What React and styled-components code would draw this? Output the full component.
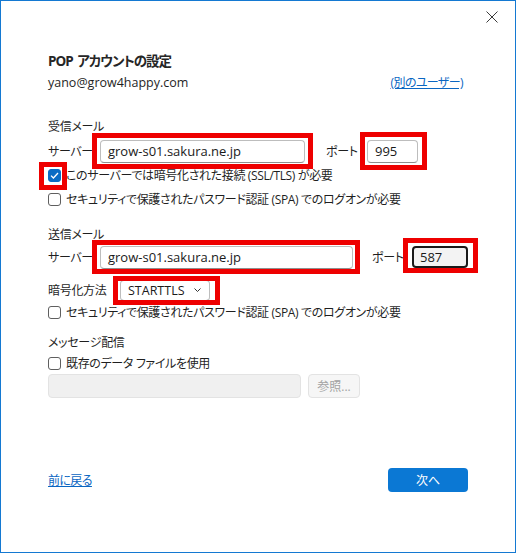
import React from "react";
import styled, { createGlobalStyle } from "styled-components";

const Global = createGlobalStyle`
  html, body { margin: 0; padding: 0; background: #ffffff; }
  body { font-family: "Open Sans", "Noto Sans CJK JP", sans-serif; }
`;

const Window = styled.div`
  box-sizing: border-box;
  width: 516px;
  height: 553px;
  border: 1px solid #1479d2;
  background: #ffffff;
  display: flex;
  flex-direction: column;
  font-family: "Open Sans", "Noto Sans CJK JP", sans-serif;
  font-feature-settings: "palt";
  font-size: 12px;
  color: #1f1f1f;
`;

const TitleBar = styled.div`
  display: flex;
  justify-content: flex-end;
  height: 32px;
`;

const CloseButton = styled.button`
  width: 46px;
  height: 32px;
  border: none;
  background: transparent;
  padding: 0;
  display: flex;
  align-items: center;
  justify-content: center;
  color: #333;
`;

const Content = styled.div`
  flex: 1;
  display: flex;
  flex-direction: column;
  padding: 0 47px 60px 47px;
`;

const Title = styled.h1`
  margin: 18px 0 0 0;
  height: 20px;
  line-height: 20px;
  font-size: 13.5px;
  font-weight: 700;
  letter-spacing: -1px;
  word-spacing: 2px;
  color: #262626;
`;

const EmailRow = styled.div`
  display: flex;
  justify-content: space-between;
  align-items: center;
  height: 22px;
  font-size: 12.5px;
`;

const Link = styled.a`
  color: #0a66c2;
  text-decoration: underline;
  cursor: pointer;
  font-size: 12px;
  letter-spacing: ${(p) => p.$ls || 0}px;
  margin-right: ${(p) => p.$mr || 0}px;
`;

const JpText = styled.span`
  letter-spacing: -0.35px;
  white-space: nowrap;
`;

const SectionHeading = styled.div`
  height: 20px;
  line-height: 20px;
  letter-spacing: -0.3px;
  margin-top: ${(p) => p.$mt}px;
`;

const FieldRow = styled.div`
  display: flex;
  align-items: center;
  height: ${(p) => p.$h || 24}px;
  margin-top: ${(p) => p.$mt || 0}px;
`;

const Label = styled.span`
  width: ${(p) => p.$w}px;
  margin-left: ${(p) => p.$ml || 0}px;
  flex-shrink: 0;
  white-space: nowrap;
  letter-spacing: -0.3px;
`;

const Highlight = styled.span`
  position: relative;
  display: inline-flex;
  &::after {
    content: "";
    position: absolute;
    top: ${(p) => -p.$t}px;
    right: ${(p) => -p.$r}px;
    bottom: ${(p) => -p.$b}px;
    left: ${(p) => -p.$l}px;
    border: 5px solid #ee0000;
    pointer-events: none;
  }
`;

const TextBox = styled.div`
  box-sizing: border-box;
  width: ${(p) => p.$w}px;
  height: ${(p) => p.$h || 23}px;
  border: ${(p) => (p.$focused ? "2px solid #1a1a1a" : "1px solid #bdbdbd")};
  border-bottom-color: ${(p) => (p.$focused ? "#1a1a1a" : "#8f8f8f")};
  border-radius: 4px;
  background: ${(p) => (p.$focused ? "#f3f3f3" : p.$disabled ? "#f0f0f0" : "#ffffff")};
  ${(p) => p.$disabled && "border-color: #e3e3e3;"}
  display: flex;
  align-items: center;
  padding-left: ${(p) => (p.$focused ? 6 : 7)}px;
  font-size: 13px;
  color: #1a1a1a;
`;

const Select = styled.div`
  box-sizing: border-box;
  width: 90px;
  height: 21px;
  border: 1px solid #bdbdbd;
  border-bottom-color: #8f8f8f;
  border-radius: 4px;
  display: flex;
  align-items: center;
  justify-content: space-between;
  padding: 0 8px 0 7px;
  font-size: 12.5px;
  color: #1a1a1a;
`;

const CheckRow = styled.label`
  display: flex;
  align-items: center;
  gap: 5px;
  height: ${(p) => p.$h || 24}px;
`;

const Box = styled.span`
  box-sizing: border-box;
  width: 13px;
  height: 13px;
  border-radius: 3px;
  border: 1px solid ${(p) => (p.$checked ? "#0a6cc4" : "#5f5f5f")};
  background: ${(p) => (p.$checked ? "#0a6cc4" : "#ffffff")};
  display: inline-flex;
  align-items: center;
  justify-content: center;
  flex-shrink: 0;
`;

const GhostButton = styled.div`
  box-sizing: border-box;
  width: 52px;
  height: 24px;
  margin-left: 7px;
  border: 1px solid #e3e3e3;
  border-radius: 4px;
  background: #f6f6f6;
  color: #a3a3a3;
  display: flex;
  align-items: center;
  justify-content: center;
`;

const Footer = styled.div`
  margin-top: auto;
  display: flex;
  justify-content: space-between;
  align-items: center;
  height: 24px;
`;

const PrimaryButton = styled.button`
  width: 80px;
  height: 24px;
  border: none;
  border-radius: 4px;
  background: #0b78d4;
  color: #ffffff;
  font-family: inherit;
  font-feature-settings: "palt";
  font-size: 12px;
`;

function Checkbox({ checked }) {
  return (
    <Box $checked={checked}>
      {checked && (
        <svg width="9" height="7" viewBox="0 0 9 7">
          <path d="M1 3.6 L3.4 6 L8 1" fill="none" stroke="#fff" strokeWidth="1.3" />
        </svg>
      )}
    </Box>
  );
}

export default function App() {
  return (
    <>
      <Global />
      <Window>
        <TitleBar>
          <CloseButton aria-label="close">
            <svg width="12" height="12" viewBox="0 0 12 12">
              <path d="M0.5 0.5 L11.5 11.5 M11.5 0.5 L0.5 11.5" stroke="#3a3a3a" strokeWidth="1" fill="none" />
            </svg>
          </CloseButton>
        </TitleBar>
        <Content>
          <Title>POP アカウントの設定</Title>
          <EmailRow>
            <span>yano@grow4happy.com</span>
            <Link $mr={5} $ls={-0.6}>(別のユーザー)</Link>
          </EmailRow>

          <SectionHeading $mt={24}>受信メール</SectionHeading>
          <FieldRow $mt={2}>
            <Label $w={52}>サーバー</Label>
            <Highlight $t={7} $r={8} $b={6} $l={8}>
              <TextBox $w={205}>grow-s01.sakura.ne.jp</TextBox>
            </Highlight>
            <Label $w={41} $ml={21}>ポート</Label>
            <Highlight $t={8} $r={9} $b={7} $l={7}>
              <TextBox $w={51}>995</TextBox>
            </Highlight>
          </FieldRow>
          <CheckRow>
            <Highlight $t={7} $r={6} $b={8} $l={9}>
              <Checkbox checked />
            </Highlight>
            <JpText>このサーバーでは暗号化された接続 (SSL/TLS) が必要</JpText>
          </CheckRow>
          <CheckRow>
            <Checkbox />
            <JpText>セキュリティで保護されたパスワード認証 (SPA) でのログオンが必要</JpText>
          </CheckRow>

          <SectionHeading $mt={14}>送信メール</SectionHeading>
          <FieldRow>
            <Label $w={52}>サーバー</Label>
            <Highlight $t={6} $r={7} $b={5} $l={8}>
              <TextBox $w={253}>grow-s01.sakura.ne.jp</TextBox>
            </Highlight>
            <Label $w={40} $ml={19}>ポート</Label>
            <Highlight $t={8} $r={10} $b={5} $l={9}>
              <TextBox $w={56} $h={22} $focused>587</TextBox>
            </Highlight>
          </FieldRow>
          <FieldRow $h={22} $mt={10}>
            <Label $w={72}>暗号化方法</Label>
            <Highlight $t={4} $r={10} $b={4} $l={7}>
              <Select>
                <span>STARTTLS</span>
                <svg width="7" height="4" viewBox="0 0 7 4">
                  <path d="M0.5 0.5 L3.5 3.5 L6.5 0.5" fill="none" stroke="#333" strokeWidth="1" />
                </svg>
              </Select>
            </Highlight>
          </FieldRow>
          <CheckRow $h={22}>
            <Checkbox />
            <JpText>セキュリティで保護されたパスワード認証 (SPA) でのログオンが必要</JpText>
          </CheckRow>

          <SectionHeading $mt={10}>メッセージ配信</SectionHeading>
          <CheckRow $h={20}>
            <Checkbox />
            <JpText>既存のデータ ファイルを使用</JpText>
          </CheckRow>
          <FieldRow $mt={1}>
            <TextBox $w={253} $h={24} $disabled />
            <GhostButton>参照...</GhostButton>
          </FieldRow>

          <Footer>
            <Link $ls={-0.6}>前に戻る</Link>
            <PrimaryButton>次へ</PrimaryButton>
          </Footer>
        </Content>
      </Window>
    </>
  );
}
